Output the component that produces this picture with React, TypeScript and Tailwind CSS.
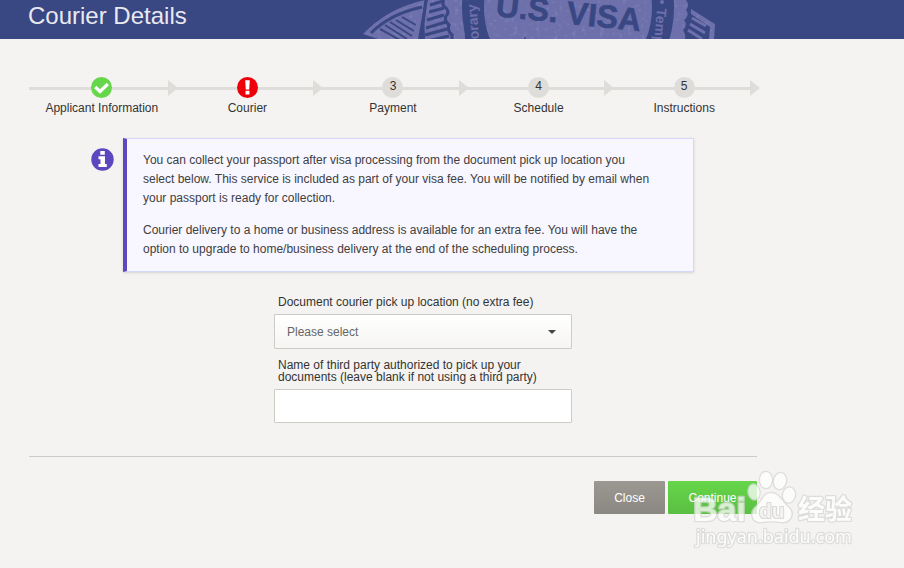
import React from 'react';

type StepState = 'done' | 'error' | 'todo';

interface Step {
  label: string;
  state: StepState;
}

const steps: Step[] = [
  { label: 'Applicant Information', state: 'done' },
  { label: 'Courier', state: 'error' },
  { label: 'Payment', state: 'todo' },
  { label: 'Schedule', state: 'todo' },
  { label: 'Instructions', state: 'todo' },
];

const badgeColor: Record<StepState, string> = {
  done: 'bg-[#66d64a]',
  error: 'bg-[#ee000a]',
  todo: 'bg-[#deddd9]',
};

// Visa seal, cropped by the header
const Seal: React.FC = () => (
  <svg width="366" height="39" viewBox="362 0 366 39" aria-hidden="true">
    <defs>
      <filter id="grain" x="0" y="0" width="100%" height="100%">
        <feTurbulence type="fractalNoise" baseFrequency="0.22" numOctaves="2" seed="4" />
        <feColorMatrix values="0 0 0 0 0.22  0 0 0 0 0.28  0 0 0 0 0.52  2 0 0 0 -1.15" />
        <feComposite in2="SourceGraphic" operator="in" result="spots" />
        <feMerge>
          <feMergeNode in="SourceGraphic" />
          <feMergeNode in="spots" />
        </feMerge>
      </filter>
    </defs>
    <g filter="url(#grain)" fill="#6e70ab">
      {/* left wing */}
      <path d="M425 0 L418 39 H378 L363 34 Q388 8 425 0Z" />
      <path d="M428 0 H463 L465 39 H425 L424 14Z" />
      {/* right wing */}
      <path d="M660 0 H686 Q690 5 686 10 Q690 15 684 20 Q688 25 683 30 Q686 35 685 39 H660Z" />
      <path d="M691 9 L715 24 L714 39 H709 L710 27 L691 14Z" />
    </g>
    <g fill="none" stroke="#394783">
      <path strokeWidth="3" d="M371 33 Q390 14 422 7" />
      <path strokeWidth="2" d="M380 29 L400 40 M385 25 L407 39 M390 22 L412 36 M396 20 L414 31 M402 17 L416 25" />
      <path strokeWidth="3" d="M426 0 L421 39" />
      <path strokeWidth="3" d="M444 0 Q441 5 446 8 Q450 12 446 16 Q444 21 449 25 Q447 31 452 35 L452 39" />
      <path strokeWidth="3" d="M430 5 L443 1 M429 12 L444 8 M427 20 L444 15 M426 28 L446 22 M425 35 L447 29 M427 41 L449 36" />
    </g>
    <g fill="none" stroke="#6e70ab" strokeWidth="3">
      <path d="M692 18 L706 26 M690 24 L705 33 M688 30 L702 39" />
    </g>
    <circle cx="568" cy="8" r="106" fill="#394783" />
    <circle cx="568" cy="8" r="84" fill="#6e70ab" filter="url(#grain)" />
    <text
      x="495"
      y="16"
      transform="rotate(6 495 16)"
      fontSize="32"
      fontWeight="700"
      fill="#394783"
      stroke="#394783"
      strokeWidth="0.6"
      fontFamily="Liberation Sans, Arial, sans-serif"
    >
      U.S. VISA
    </text>
    <g fontSize="14" fontWeight="700" fill="#6e70ab" fontFamily="Liberation Sans, Arial, sans-serif">
      <text x="479" y="39" transform="rotate(-94 479 39)">
        orary V
      </text>
      <text x="657" y="8" transform="rotate(95 657 8)">
        Temp
      </text>
    </g>
    <circle cx="662" cy="2" r="2" fill="#6e70ab" />
    <path d="M524 39 l1 -3 l1 3z" fill="#394783" />
  </svg>
);

const StepBadge: React.FC<{ state: StepState; number: number }> = ({ state, number }) => (
  <span
    className={`flex h-[21px] w-[21px] items-start justify-center rounded-full text-xs leading-[18px] text-[#333333] ${badgeColor[state]}`}
  >
    {state === 'done' && (
      <svg width="21" height="21" viewBox="0 0 21 21" aria-hidden="true">
        <path d="M4.2 10 L9 14.5 L16.8 7" fill="none" stroke="#fff" strokeWidth="3.2" />
      </svg>
    )}
    {state === 'error' && (
      <svg width="21" height="21" viewBox="0 0 21 21" aria-hidden="true">
        <path fill="#fff" d="M8.2 3.2 h4.6 l-.6 9.3 h-3.4z M8.5 13.8 h4 v3.6 h-4z" />
      </svg>
    )}
    {state === 'todo' && number}
  </span>
);

const Stepper: React.FC = () => (
  <ol className="grid grid-cols-5">
    {steps.map((step, i) => (
      <li key={step.label} className="flex flex-col items-center">
        <div className="relative flex w-full justify-center">
          <span className="absolute inset-x-0 top-[10px] h-[3px] bg-[#deddd9]"></span>
          <svg className="absolute -right-[3px] top-[3px]" width="10" height="16" aria-hidden="true">
            <path d="M0 0 L10 8 L0 16Z" fill="#deddd9" />
          </svg>
          <span className="relative">
            <StepBadge state={step.state} number={i + 1} />
          </span>
        </div>
        <span className="text-xs leading-5 text-[#333333]">{step.label}</span>
      </li>
    ))}
  </ol>
);

const Watermark: React.FC = () => (
  <svg
    className="pointer-events-none absolute bottom-3 right-[45px]"
    width="170"
    height="90"
    viewBox="689 466 170 90"
    aria-hidden="true"
  >
    <g fill="#fff" stroke="#d6d6d4" strokeWidth="2.6" strokeLinejoin="round" opacity="0.75" style={{ paintOrder: 'stroke' }}>
      <ellipse cx="754" cy="492" rx="5.5" ry="7.5" transform="rotate(-10 754 492)" />
      <ellipse cx="766" cy="480" rx="6" ry="8" />
      <ellipse cx="780" cy="481" rx="6" ry="8" transform="rotate(12 780 481)" />
      <ellipse cx="789" cy="495" rx="6" ry="7.5" transform="rotate(10 789 495)" />
      <path d="M771 493 C764 493 762 501 757 506 C749 512 752 523 761 522 C768 521 774 521 781 522 C791 523 795 513 788 507 C782 502 779 493 771 493Z" />
      <g fontFamily="Liberation Sans, Arial, sans-serif" fontWeight="700">
        <text x="693" y="521" fontSize="34">
          Bai
        </text>
        <text x="759" y="518" fontSize="21" fill="#f4f3f1" stroke="#cfcfcd" strokeWidth="2">
          du
        </text>
      </g>
      <text x="798" y="519" fontSize="27" fontWeight="700" fontFamily="Noto Sans CJK SC, sans-serif">
        经验
      </text>
      <text x="696" y="543" fontSize="18" fontFamily="Noto Sans, sans-serif">
        jingyan.baidu.com
      </text>
    </g>
  </svg>
);

const App: React.FC = () => {
  return (
    <div className="relative min-h-screen bg-[#f4f3f1] font-['Liberation_Sans',Arial,sans-serif] text-[#333333]">
      {/* Header */}
      <header className="relative h-[39px] overflow-hidden bg-[#394783] pl-7">
        <div className="absolute left-[362px] top-0">
          <Seal />
        </div>
        <h1 className="text-2xl leading-8 text-[#e9e9f0]">Courier Details</h1>
      </header>

      <main className="max-w-[757px] pl-[29px] pt-[38px]">
        <Stepper />

        {/* Notice */}
        <section className="mt-5 flex pl-[62px] pr-[63px]">
          <svg className="mr-[9px] mt-[10px] shrink-0" width="23" height="23" viewBox="0 0 23 23" aria-hidden="true">
            <circle cx="11.5" cy="11.5" r="11.2" fill="#5c47bf" />
            <path fill="#fff" d="M9.3 3 h4.5 v3.8 h-4.5z M7.5 8.3 h6.5 v7.7 h1.8 v3 h-8.3 v-3 h2 v-4.7 h-2z" />
          </svg>
          <div className="flex-1 space-y-[13px] border border-l-4 border-[#d5d8f8] border-l-[#5c47bf] bg-[#f8f6ff] py-3 pl-4 pr-10 text-xs leading-[19px] text-[#404040] shadow-sm">
            <p>
              You can collect your passport after visa processing from the document pick up location you select below.
              This service is included as part of your visa fee. You will be notified by email when your passport is
              ready for collection.
            </p>
            <p>
              Courier delivery to a home or business address is available for an extra fee. You will have the option to
              upgrade to home/business delivery at the end of the scheduling process.
            </p>
          </div>
        </section>

        {/* Form */}
        <form onSubmit={(e) => e.preventDefault()}>
          <div className="ml-[245px] mt-6 w-[298px] text-xs leading-3">
            <label htmlFor="location" className="block pl-1">
              Document courier pick up location (no extra fee)
            </label>
            <div className="relative mt-[6px]">
              <select
                id="location"
                className="h-[35px] w-full appearance-none rounded-[1px] border border-[#cccbc5] bg-linear-to-b from-white to-[#f6f5f3] px-3 text-[#666666]"
              >
                <option>Please select</option>
              </select>
              <svg className="pointer-events-none absolute right-4 top-4" width="8" height="4" aria-hidden="true">
                <path d="M0 0 H8 L4 4Z" fill="#444" />
              </svg>
            </div>
            <label htmlFor="third-party" className="mt-[10px] block pl-1">
              Name of third party authorized to pick up your documents (leave blank if not using a third party)
            </label>
            <input
              id="third-party"
              type="text"
              className="mt-[6px] block h-[34px] w-full rounded-[1px] border border-[#cccbc5] bg-white px-3"
            />
          </div>

          <div className="mt-[33px] flex justify-end gap-[3px] border-t border-[#cccbc9] pt-6 text-xs text-white">
            <button type="button" className="h-[33px] w-[71px] rounded-[1px] bg-linear-to-b from-[#9b9891] to-[#8b8883]">
              Close
            </button>
            <button type="submit" className="h-[33px] w-[89px] rounded-[1px] bg-linear-to-b from-[#66d64a] to-[#5abf42]">
              Continue
            </button>
          </div>
        </form>
      </main>

      <Watermark />
    </div>
  );
};

export default App;
